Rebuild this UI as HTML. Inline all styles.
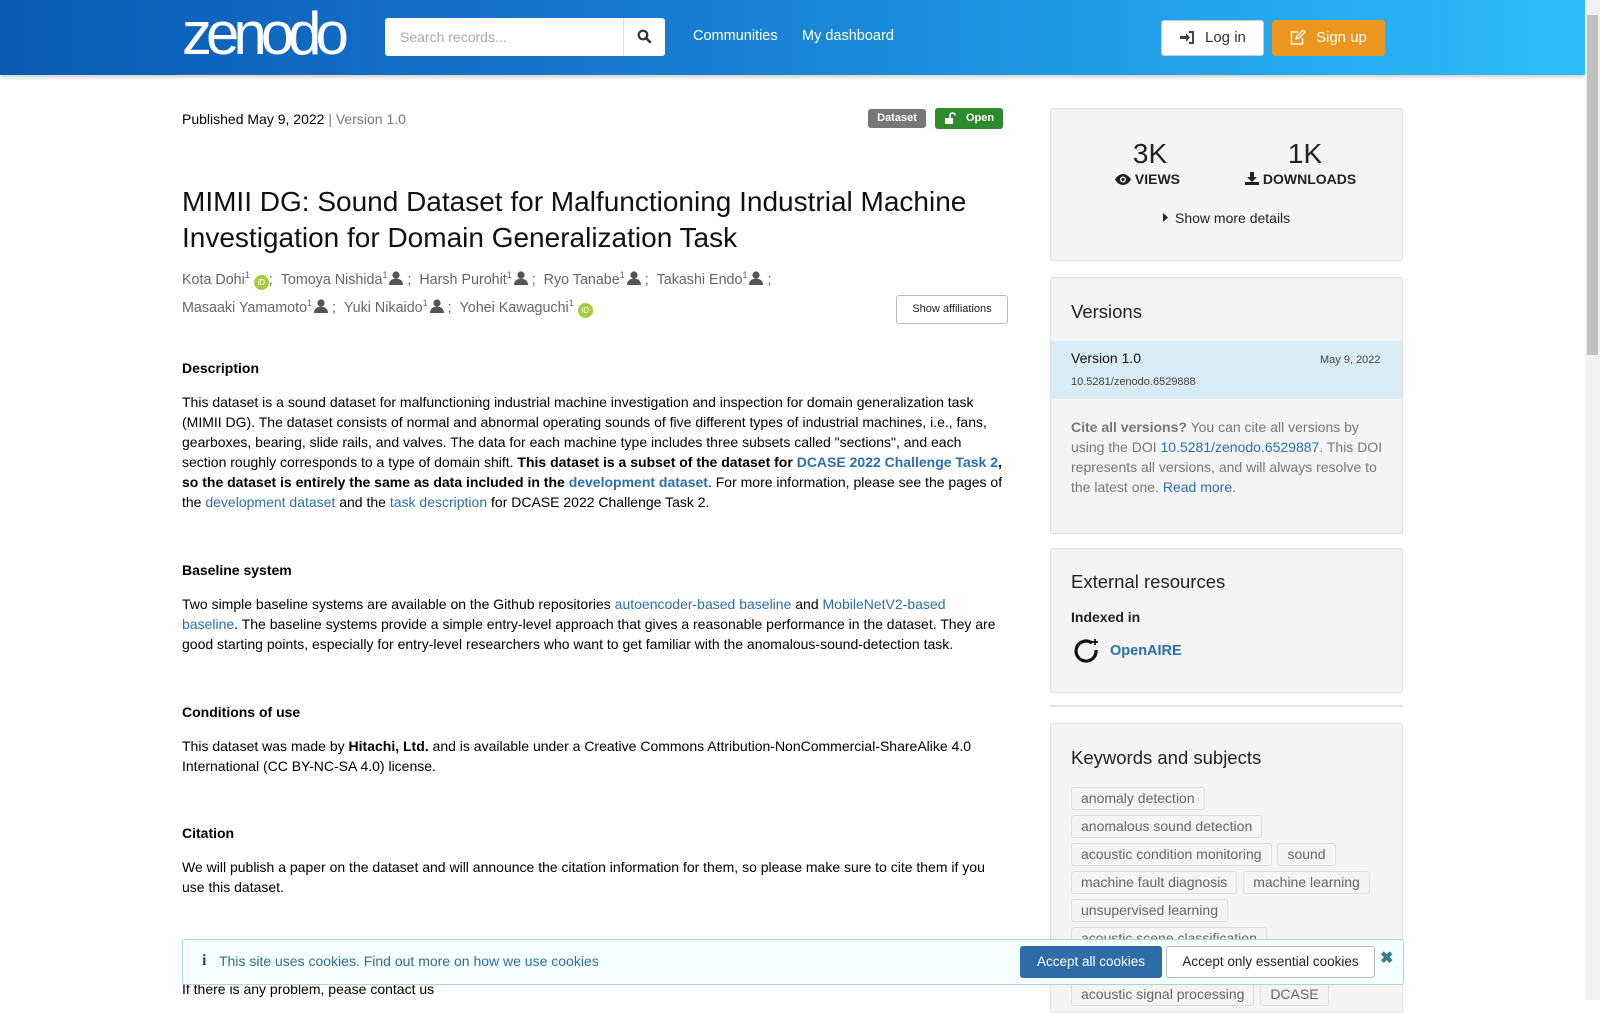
<!DOCTYPE html>
<html><head><meta charset="utf-8">
<style>
*{box-sizing:border-box;margin:0;padding:0}
html,body{width:1600px;height:1000px;overflow:hidden;background:#fff;font-family:"Liberation Sans",Arial,sans-serif;font-size:14px;color:#000}
a{color:#2a6fb0;text-decoration:none}
.abs{position:absolute}
#hdr{position:absolute;left:0;top:0;width:1585px;height:75px;background:linear-gradient(90deg,#0b5ab3 0%,#1679d0 40%,#22a2ea 75%,#2cbdfc 100%);box-shadow:0 2px 4px rgba(0,0,0,.2)}
#sb{position:absolute;left:1585px;top:0;width:15px;height:1000px;background:#f1f1f1}
#sb div{position:absolute;left:2px;top:15px;width:11px;height:340px;background:#c1c1c1}
.panel{position:absolute;left:1050px;width:353px;background:#f4f4f4;border:1px solid #e0e0e0;border-radius:3px}
.tag{display:inline-block;border:1px solid #ddd;border-radius:3px;padding:2px 9px;font-size:14px;color:#666;margin:0 2px 5px 0;line-height:17px}
p.body{line-height:20px;font-size:14px}
h4{font-size:14px;font-weight:bold}
.auth{color:#666;font-size:14.3px}
.orc{display:inline-block;width:15px;height:15px;border-radius:50%;background:#a6ce39;color:#fff;font-size:8px;line-height:15px;text-align:center;vertical-align:-1px}
sup{font-size:9px;line-height:0;vertical-align:6px}
.ui{display:inline-block;width:14px;height:14px;vertical-align:-1px;margin-left:2px}
</style></head><body>
<div id="hdr">
 <div class="abs" style="left:182px;top:2px;font-size:60px;color:#fff;letter-spacing:-6px;line-height:64px;font-family:'Liberation Sans',sans-serif">zenodo</div>
 <div class="abs" style="left:385px;top:18px;width:280px;height:38px;background:#fff;border-radius:3px"></div>
 <div class="abs" style="left:400px;top:29px;color:#aaa;font-size:14px">Search records...</div>
 <div class="abs" style="left:623px;top:18px;width:1px;height:38px;background:#ddd"></div>
 <svg class="abs" style="left:637px;top:29px" width="15" height="15" viewBox="0 0 15 15"><circle cx="6" cy="6" r="4.3" fill="none" stroke="#333" stroke-width="2.2"/><line x1="9" y1="9" x2="13" y2="13" stroke="#333" stroke-width="2.6" stroke-linecap="round"/></svg>
 <div class="abs" style="left:693px;top:28px;color:#fff;font-size:14.5px">Communities</div>
 <div class="abs" style="left:802px;top:28px;color:#fff;font-size:14.5px">My dashboard</div>
 <div class="abs" style="left:1161px;top:20px;width:103px;height:36px;background:#fff;border:1px solid #ccc;border-radius:3px"></div>
 <svg class="abs" style="left:1180px;top:31px" width="15" height="13" viewBox="0 0 15 13"><path d="M0 5h6V2l4 4.5-4 4.5V8H0z" fill="#444"/><path d="M9 1h4v11H9" fill="none" stroke="#444" stroke-width="2"/></svg>
 <div class="abs" style="left:1205px;top:29px;color:#333;font-size:15px">Log in</div>
 <div class="abs" style="left:1272px;top:20px;width:113px;height:36px;background:#ec951f;border-radius:3px"></div>
 <svg class="abs" style="left:1290px;top:30px" width="16" height="15" viewBox="0 0 16 15"><path d="M8 2H1.5v12h11V8" fill="none" stroke="#fff" stroke-width="1.4"/><path d="M6 9l1-3 6-6 2 2-6 6z" fill="none" stroke="#fff" stroke-width="1.3"/></svg>
 <div class="abs" style="left:1316px;top:29px;color:#fff;font-size:15px">Sign up</div>
</div>
<div id="sb"><div></div></div>

<div class="abs" style="left:182px;top:111px;font-size:14px">Published May 9, 2022 <span style="color:#777">| Version 1.0</span></div>
<div class="abs" style="left:868px;top:109px;width:58px;height:19px;background:#777;border-radius:3px;color:#fff;font-size:11px;font-weight:bold;text-align:center;line-height:19px">Dataset</div>
<div class="abs" style="left:935px;top:108px;width:68px;height:21px;background:#2d8a2d;border-radius:3px;color:#fff;font-size:11px;font-weight:bold;line-height:21px;padding-left:31px">Open</div>
<svg class="abs" style="left:945px;top:112px" width="11" height="13" viewBox="0 0 11 13"><path d="M5 6V3.5a2.5 2.5 0 0 1 5 0" fill="none" stroke="#fff" stroke-width="1.6"/><rect x="0" y="6" width="8" height="6" fill="#fff"/></svg>

<div class="abs" style="left:182px;top:184px;font-size:28px;line-height:36px;width:820px;color:#111">MIMII DG: Sound Dataset for Malfunctioning Industrial Machine Investigation for Domain Generalization Task</div>

<svg width="0" height="0" style="position:absolute"><defs><symbol id="u" viewBox="0 0 14 14"><circle cx="7" cy="4" r="3.6" fill="#555"/><path d="M0 14c0-4 3-6.5 7-6.5s7 2.5 7 6.5z" fill="#555"/></symbol></defs></svg>
<div class="abs auth" style="left:182px;top:267px;line-height:27.5px;width:700px">Kota Dohi<sup>1</sup> <span class="orc">iD</span>; &nbsp;Tomoya Nishida<sup>1</sup><svg class="ui"><use href="#u"/></svg> ; &nbsp;Harsh Purohit<sup>1</sup><svg class="ui"><use href="#u"/></svg> ; &nbsp;Ryo Tanabe<sup>1</sup><svg class="ui"><use href="#u"/></svg> ; &nbsp;Takashi Endo<sup>1</sup><svg class="ui"><use href="#u"/></svg> ;<br>Masaaki Yamamoto<sup>1</sup><svg class="ui"><use href="#u"/></svg> ; &nbsp;Yuki Nikaido<sup>1</sup><svg class="ui"><use href="#u"/></svg> ; &nbsp;Yohei Kawaguchi<sup>1</sup> <span class="orc">iD</span></div>
<div class="abs" style="left:896px;top:295px;width:112px;height:29px;border:1px solid #bbb;border-radius:3px;font-size:11px;text-align:center;line-height:27px;color:#222">Show affiliations</div>

<h4 class="abs" style="left:182px;top:360px">Description</h4>
<p class="abs body" style="left:182px;top:392px;width:826px">This dataset is a sound dataset for malfunctioning industrial machine investigation and inspection for domain generalization task (MIMII DG). The dataset consists of normal and abnormal operating sounds of five different types of industrial machines, i.e., fans, gearboxes, bearing, slide rails, and valves. The data for each machine type includes three subsets called "sections", and each section roughly corresponds to a type of domain shift. <b>This dataset is a subset of the dataset for <a href="#">DCASE 2022 Challenge Task 2</a>, so the dataset is entirely the same as data included in the <a href="#">development dataset</a></b>. For more information, please see the pages of the <a href="#">development dataset</a> and the <a href="#">task description</a> for DCASE 2022 Challenge Task 2.</p>

<h4 class="abs" style="left:182px;top:562px">Baseline system</h4>
<p class="abs body" style="left:182px;top:594px;width:826px">Two simple baseline systems are available on the Github repositories <a href="#">autoencoder-based baseline</a> and <a href="#">MobileNetV2-based</a><br><a href="#">baseline</a>. The baseline systems provide a simple entry-level approach that gives a reasonable performance in the dataset. They are good starting points, especially for entry-level researchers who want to get familiar with the anomalous-sound-detection task.</p>

<h4 class="abs" style="left:182px;top:704px">Conditions of use</h4>
<p class="abs body" style="left:182px;top:736px;width:826px">This dataset was made by <b>Hitachi, Ltd.</b> and is available under a Creative Commons Attribution-NonCommercial-ShareAlike 4.0 International (CC BY-NC-SA 4.0) license.</p>

<h4 class="abs" style="left:182px;top:825px">Citation</h4>
<p class="abs body" style="left:182px;top:857px;width:826px">We will publish a paper on the dataset and will announce the citation information for them, so please make sure to cite them if you use this dataset.</p>
<p class="abs body" style="left:182px;top:979px">If there is any problem, pease contact us</p>

<!-- right -->
<div class="panel" style="top:108px;height:153px"></div>
<div class="abs" style="left:1100px;top:138px;width:100px;text-align:center;font-size:28px;color:#222">3K</div>
<div class="abs" style="left:1115px;top:171px;font-size:14px;font-weight:bold;color:#222"><svg width="16" height="11" viewBox="0 0 16 11" style="vertical-align:-1px"><path d="M0 5.5C2 2 5 0 8 0s6 2 8 5.5C14 9 11 11 8 11S2 9 0 5.5z" fill="#222"/><circle cx="8" cy="5.5" r="3" fill="#fff"/><circle cx="8" cy="5.5" r="1.6" fill="#222"/></svg> VIEWS</div>
<div class="abs" style="left:1255px;top:138px;width:100px;text-align:center;font-size:28px;color:#222">1K</div>
<div class="abs" style="left:1245px;top:171px;font-size:14px;font-weight:bold;color:#222"><svg width="14" height="13" viewBox="0 0 14 13" style="vertical-align:-1px"><path d="M5 0h4v5h3l-5 5-5-5h3z" fill="#222"/><rect x="0" y="10" width="14" height="3" fill="#222"/></svg> DOWNLOADS</div>
<svg class="abs" style="left:1163px;top:213px" width="5" height="9" viewBox="0 0 5 9"><path d="M0 0l5 4.5L0 9z" fill="#222"/></svg>
<div class="abs" style="left:1175px;top:210px;font-size:14px;color:#222">Show more details</div>

<div class="panel" style="top:277px;height:257px"></div>
<div class="abs" style="left:1071px;top:301px;font-size:18.5px;color:#222">Versions</div>
<div class="abs" style="left:1051px;top:341px;width:351px;height:58px;background:#d9ebf5"></div>
<div class="abs" style="left:1071px;top:350px;font-size:14px;color:#111">Version 1.0</div>
<div class="abs" style="left:1320px;top:354px;font-size:11px;color:#444">May 9, 2022</div>
<div class="abs" style="left:1071px;top:376px;font-size:11px;color:#444">10.5281/zenodo.6529888</div>
<div class="abs" style="left:1071px;top:417px;width:320px;font-size:14px;line-height:20px;color:#777"><b>Cite all versions?</b> You can cite all versions by using the DOI <a href="#">10.5281/zenodo.6529887</a>. This DOI represents all versions, and will always resolve to the latest one. <a href="#">Read more</a>.</div>

<div class="panel" style="top:548px;height:145px"></div>
<div class="abs" style="left:1071px;top:571px;font-size:18.5px;color:#222">External resources</div>
<div class="abs" style="left:1071px;top:609px;font-size:14px;font-weight:bold;color:#222">Indexed in</div>
<svg class="abs" style="left:1073px;top:638px" width="28" height="28" viewBox="0 0 28 28"><path d="M19 5A10 10 0 1 0 23 12" fill="none" stroke="#111" stroke-width="3.2"/><path d="M22 1v6M19 4h6" stroke="#111" stroke-width="1.8"/></svg>
<div class="abs" style="left:1110px;top:643px;font-size:14.5px;font-weight:bold;color:#2a6fb0">OpenAIRE</div>
<div class="abs" style="left:1050px;top:705px;width:353px;height:2px;background:#e3e3e3"></div>

<div class="panel" style="top:723px;height:290px"></div>
<div class="abs" style="left:1071px;top:747px;font-size:18.5px;color:#222">Keywords and subjects</div>
<div class="abs" style="left:1071px;top:787px;width:320px;line-height:0">
<span class="tag">anomaly detection</span><br><span class="tag">anomalous sound detection</span><br><span class="tag">acoustic condition monitoring</span> <span class="tag">sound</span><br><span class="tag">machine fault diagnosis</span> <span class="tag">machine learning</span><br><span class="tag">unsupervised learning</span><br><span class="tag">acoustic scene classification</span><br><span class="tag">domain generalization</span><br><span class="tag">acoustic signal processing</span> <span class="tag">DCASE</span>
</div>

<!-- cookie -->
<div class="abs" style="left:182px;top:939px;width:1222px;height:46px;background:#f4fdff;border:1px solid #a9d4dc;border-radius:3px"></div>
<div class="abs" style="left:202px;top:952px;font-size:16px;font-weight:bold;color:#245269;font-family:'Liberation Serif',serif">i</div>
<div class="abs" style="left:219px;top:953px;font-size:14px;color:#31708f">This site uses cookies. Find out more on <a href="#" style="color:#2a6fb0">how we use cookies</a></div>
<div class="abs" style="left:1020px;top:946px;width:142px;height:32px;background:#2d6ca6;border-radius:3px;color:#fff;font-size:13.5px;text-align:center;line-height:32px">Accept all cookies</div>
<div class="abs" style="left:1166px;top:946px;width:209px;height:32px;background:#fff;border:1px solid #bbb;border-radius:3px;color:#222;font-size:13.5px;text-align:center;line-height:30px">Accept only essential cookies</div>
<div class="abs" style="left:1380px;top:948px;font-size:16px;font-weight:bold;color:#3b7a99">&#10006;</div>
</body></html>
